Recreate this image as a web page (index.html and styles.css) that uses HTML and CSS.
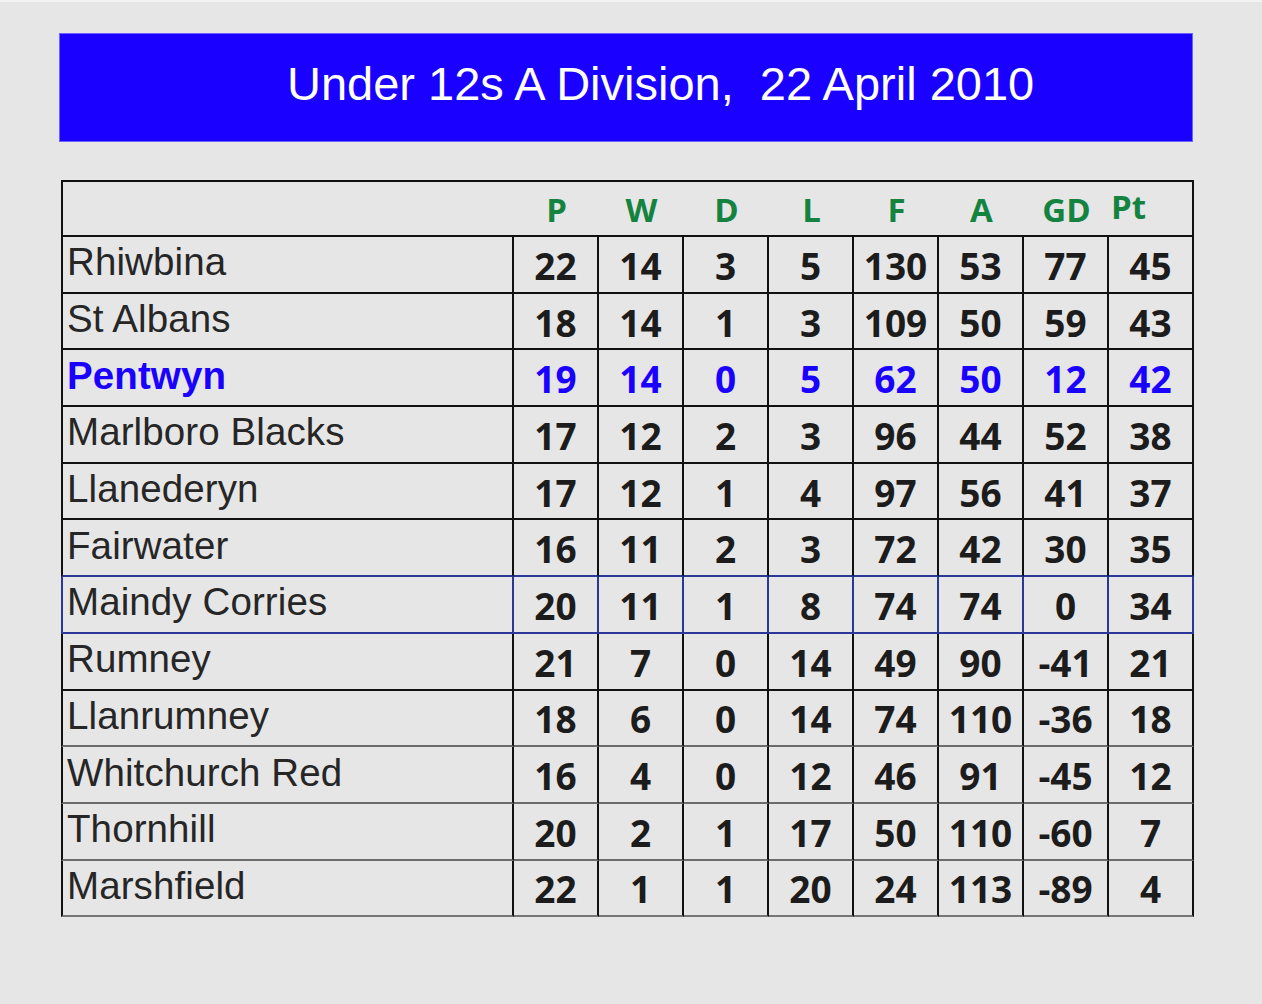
FILE: index.html
```html
<!DOCTYPE html>
<html lang="en">
<head>
<meta charset="utf-8">
<title>Under 12s A Division, 22 April 2010</title>
<link rel="stylesheet" href="styles.css">
</head>
<body>
<div class="page">
  <header class="banner"><h1 class="title">Under 12s A Division,  22 April 2010</h1></header>
  <table class="league">
    <colgroup>
      <col class="c-name"><col class="c-num"><col class="c-num"><col class="c-num"><col class="c-num"><col class="c-num"><col class="c-num"><col class="c-num"><col class="c-num">
    </colgroup>
    <thead>
      <tr class="head">
        <th class="name"></th><th>P</th><th>W</th><th>D</th><th>L</th><th>F</th><th>A</th><th>GD</th><th class="pt">Pt</th>
      </tr>
    </thead>
    <tbody>
      <tr><td class="name">Rhiwbina</td><td>22</td><td>14</td><td>3</td><td>5</td><td>130</td><td>53</td><td>77</td><td>45</td></tr>
      <tr><td class="name">St Albans</td><td>18</td><td>14</td><td>1</td><td>3</td><td>109</td><td>50</td><td>59</td><td>43</td></tr>
      <tr class="own"><td class="name">Pentwyn</td><td>19</td><td>14</td><td>0</td><td>5</td><td>62</td><td>50</td><td>12</td><td>42</td></tr>
      <tr><td class="name">Marlboro Blacks</td><td>17</td><td>12</td><td>2</td><td>3</td><td>96</td><td>44</td><td>52</td><td>38</td></tr>
      <tr><td class="name">Llanederyn</td><td>17</td><td>12</td><td>1</td><td>4</td><td>97</td><td>56</td><td>41</td><td>37</td></tr>
      <tr class="pre-mark"><td class="name">Fairwater</td><td>16</td><td>11</td><td>2</td><td>3</td><td>72</td><td>42</td><td>30</td><td>35</td></tr>
      <tr class="mark"><td class="name">Maindy Corries</td><td>20</td><td>11</td><td>1</td><td>8</td><td>74</td><td>74</td><td>0</td><td>34</td></tr>
      <tr><td class="name">Rumney</td><td>21</td><td>7</td><td>0</td><td>14</td><td>49</td><td>90</td><td>-41</td><td>21</td></tr>
      <tr class="soft"><td class="name">Llanrumney</td><td>18</td><td>6</td><td>0</td><td>14</td><td>74</td><td>110</td><td>-36</td><td>18</td></tr>
      <tr class="soft"><td class="name">Whitchurch Red</td><td>16</td><td>4</td><td>0</td><td>12</td><td>46</td><td>91</td><td>-45</td><td>12</td></tr>
      <tr class="soft"><td class="name">Thornhill</td><td>20</td><td>2</td><td>1</td><td>17</td><td>50</td><td>110</td><td>-60</td><td>7</td></tr>
      <tr class="soft"><td class="name">Marshfield</td><td>22</td><td>1</td><td>1</td><td>20</td><td>24</td><td>113</td><td>-89</td><td>4</td></tr>
    </tbody>
  </table>
</div>
</body>
</html>
```

FILE: styles.css
```css
html, body {
  margin: 0;
  padding: 0;
}
body {
  background: #e6e6e6;
  border-top: 2px solid #f3f3f3;
  min-height: 1002px;
}
.page {
  padding: 31px 0 0 59px;
}
.banner {
  box-sizing: border-box;
  width: 1134px;
  height: 109px;
  background: #1a00ff;
  border: 1px solid #6a63ff;
  padding: 26px 0 0 227px;
}
.title {
  margin: 0;
  font-family: "Liberation Sans", Arial, sans-serif;
  font-weight: 400;
  font-size: 47px;
  line-height: 47px;
  color: #ffffff;
  white-space: pre;
  letter-spacing: 0;
}
.league {
  margin: 38px 0 0 2px;
  width: 1132px;
  table-layout: fixed;
  border-collapse: separate;
  border-spacing: 0;
}
.c-name { width: 453px; }
.c-num { width: 85px; }
.league th,
.league td {
  box-sizing: border-box;
  padding: 0;
  text-align: center;
  vertical-align: middle;
  border-right: 2px solid #111;
  border-bottom: 2px solid #111;
  font-family: "Open Sans", "DejaVu Sans", sans-serif;
  font-weight: 700;
  font-size: 37px;
  line-height: 40px;
  color: #1c1c1c;
}
.league td { padding-top: 3px; }
.league .name {
  border-left: 2px solid #111;
  text-align: left;
  padding: 0 0 4px 4px;
  font-family: "Liberation Sans", Arial, sans-serif;
  font-weight: 400;
  font-size: 38.5px;
  letter-spacing: 0.1px;
  color: #262626;
  white-space: nowrap;
}
.head th {
  height: 57px;
  border-top: 2px solid #111;
  border-right: none;
  color: #148340;
  font-size: 33px;
  padding-top: 2px;
}
.head th.pt {
  border-right: 2px solid #111;
  text-align: left;
  padding: 0 0 4px 2px;
}
tbody tr { height: 56.7px; }
.own td,
.own .name {
  color: #1a00ff;
}
.own .name { font-weight: 700; }
.pre-mark td { border-bottom-color: #2a3899; }
.mark td,
.mark .name {
  border-bottom-color: #2a3899;
  border-right-color: #2a3899;
}
.mark .name { border-left-color: #2a3899; }
.soft td { border-bottom-color: #6b6b6b; }
.soft:last-child td { border-bottom-color: #777; }
```
